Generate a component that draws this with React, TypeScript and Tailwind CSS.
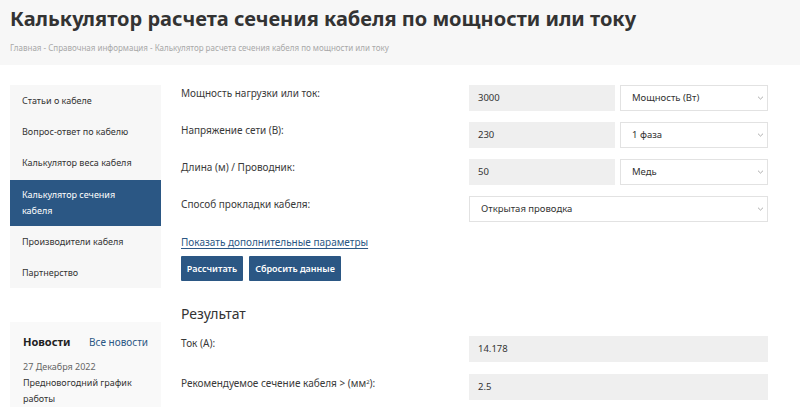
import React from 'react'

const font = { fontFamily: '"Noto Sans", "Open Sans", sans-serif' }

const menu = [
  { label: 'Статьи о кабеле' },
  { label: 'Вопрос-ответ по кабелю' },
  { label: 'Калькулятор веса кабеля' },
  { label: 'Калькулятор сечения кабеля', active: true },
  { label: 'Производители кабеля' },
  { label: 'Партнерство' },
]

function Chevron() {
  return (
    <svg width="7" height="5" viewBox="0 0 7 5" className="absolute right-[3px] top-1/2 -translate-y-1/2">
      <path d="M1 1.2 L3.5 3.6 L6 1.2" fill="none" stroke="#9a9a9a" strokeWidth="0.8" />
    </svg>
  )
}

function Select({ value, className = '' }: { value: string; className?: string }) {
  return (
    <div className={`relative h-full border border-[#e2e2e2] bg-white flex items-center pl-[11px] text-[9.5px] text-[#333] ${className}`}>
      {value}
      <Chevron />
    </div>
  )
}

function Field({ value, className = '' }: { value: string; className?: string }) {
  return (
    <div className={`h-full bg-[#efefef] flex items-center pl-[9px] text-[9.5px] text-[#333] ${className}`}>{value}</div>
  )
}

function Row({ label, children }: { label: React.ReactNode; children: React.ReactNode }) {
  return (
    <div className="flex h-[26px]">
      <div className="w-[288px] pt-[1px] text-[10px] leading-[14px] text-[#3a3a3a]">{label}</div>
      <div className="flex-1 flex gap-[5px]">{children}</div>
    </div>
  )
}

export default function App() {
  return (
    <div className="w-[800px] h-[407px] overflow-hidden bg-white" style={font}>
      <div className="h-[65px] bg-[#f7f7f7] px-[10px] pt-[4px]">
        <h1 className="text-[20px] leading-[30px] font-bold text-[#333]">
          Калькулятор расчета сечения кабеля по мощности или току
        </h1>
        <div className="mt-[8px] text-[8px] text-[#a8a8a8]">
          Главная - Справочная информация - Калькулятор расчета сечения кабеля по мощности или току
        </div>
      </div>

      <div className="flex pt-[20px] pl-[10px] gap-[20px]">
        <div className="w-[151px] shrink-0">
          <div className="bg-[#f7f7f7]">
            {menu.map((m) =>
              m.active ? (
                <div key={m.label} className="mt-[2px] h-[46px] bg-[#2b5784] px-[12px] pr-[40px] flex items-center text-[9px] leading-[16px] text-white">
                  {m.label}
                </div>
              ) : (
                <div key={m.label} className="h-[31px] px-[12px] flex items-center text-[9px] text-[#333]">
                  {m.label}
                </div>
              )
            )}
          </div>

          <div className="mt-[34px] bg-[#f9f9f9] px-[13px] pt-[12px] h-[100px]">
            <div className="flex items-baseline justify-between">
              <span className="text-[11px] font-bold text-[#222]">Новости</span>
              <span className="text-[10px] text-[#2b5784]">Все новости</span>
            </div>
            <div className="mt-[9px] text-[9px] text-[#666]">27 Декабря 2022</div>
            <div className="mt-[2px] text-[9px] leading-[16px] text-[#333]">
              Предновогодний график
              <br />
              работы
            </div>
          </div>
        </div>

        <div className="w-[587px] flex flex-col">
          <div className="flex flex-col gap-[11px]">
            <Row label="Мощность нагрузки или ток:">
              <Field value="3000" className="w-[146px]" />
              <Select value="Мощность (Вт)" className="flex-1" />
            </Row>
            <Row label="Напряжение сети (В):">
              <Field value="230" className="w-[146px]" />
              <Select value="1 фаза" className="flex-1" />
            </Row>
            <Row label="Длина (м) / Проводник:">
              <Field value="50" className="w-[146px]" />
              <Select value="Медь" className="flex-1" />
            </Row>
            <Row label="Способ прокладки кабеля:">
              <Select value="Открытая проводка" className="flex-1 pl-[10px]" />
            </Row>
          </div>

          <a className="mt-[12px] text-[10px] leading-[16px] text-[#2b5784] underline underline-offset-2 self-start">
            Показать дополнительные параметры
          </a>

          <div className="mt-[6px] flex gap-[6px]">
            <button className="h-[25px] w-[62px] bg-[#2b5784] text-white text-[9px] font-semibold rounded-[1px]">Рассчитать</button>
            <button className="h-[25px] w-[92px] bg-[#2b5784] text-white text-[9px] font-semibold rounded-[1px]">Сбросить данные</button>
          </div>

          <h2 className="mt-[23px] text-[14px] leading-[20px] font-normal text-[#333]">Результат</h2>

          <div className="mt-[12px] flex flex-col gap-[12px]">
            <div className="flex h-[26px]">
              <div className="w-[288px] text-[10px] leading-[14px] text-[#3a3a3a]">Ток (А):</div>
              <Field value="14.178" className="flex-1" />
            </div>
            <div className="flex h-[26px]">
              <div className="w-[288px] pt-[2px] text-[10px] leading-[14px] text-[#3a3a3a]">
                Рекомендуемое сечение кабеля &gt; (мм<sup className="text-[6px]">2</sup>):
              </div>
              <Field value="2.5" className="flex-1" />
            </div>
          </div>
        </div>
      </div>
    </div>
  )
}
